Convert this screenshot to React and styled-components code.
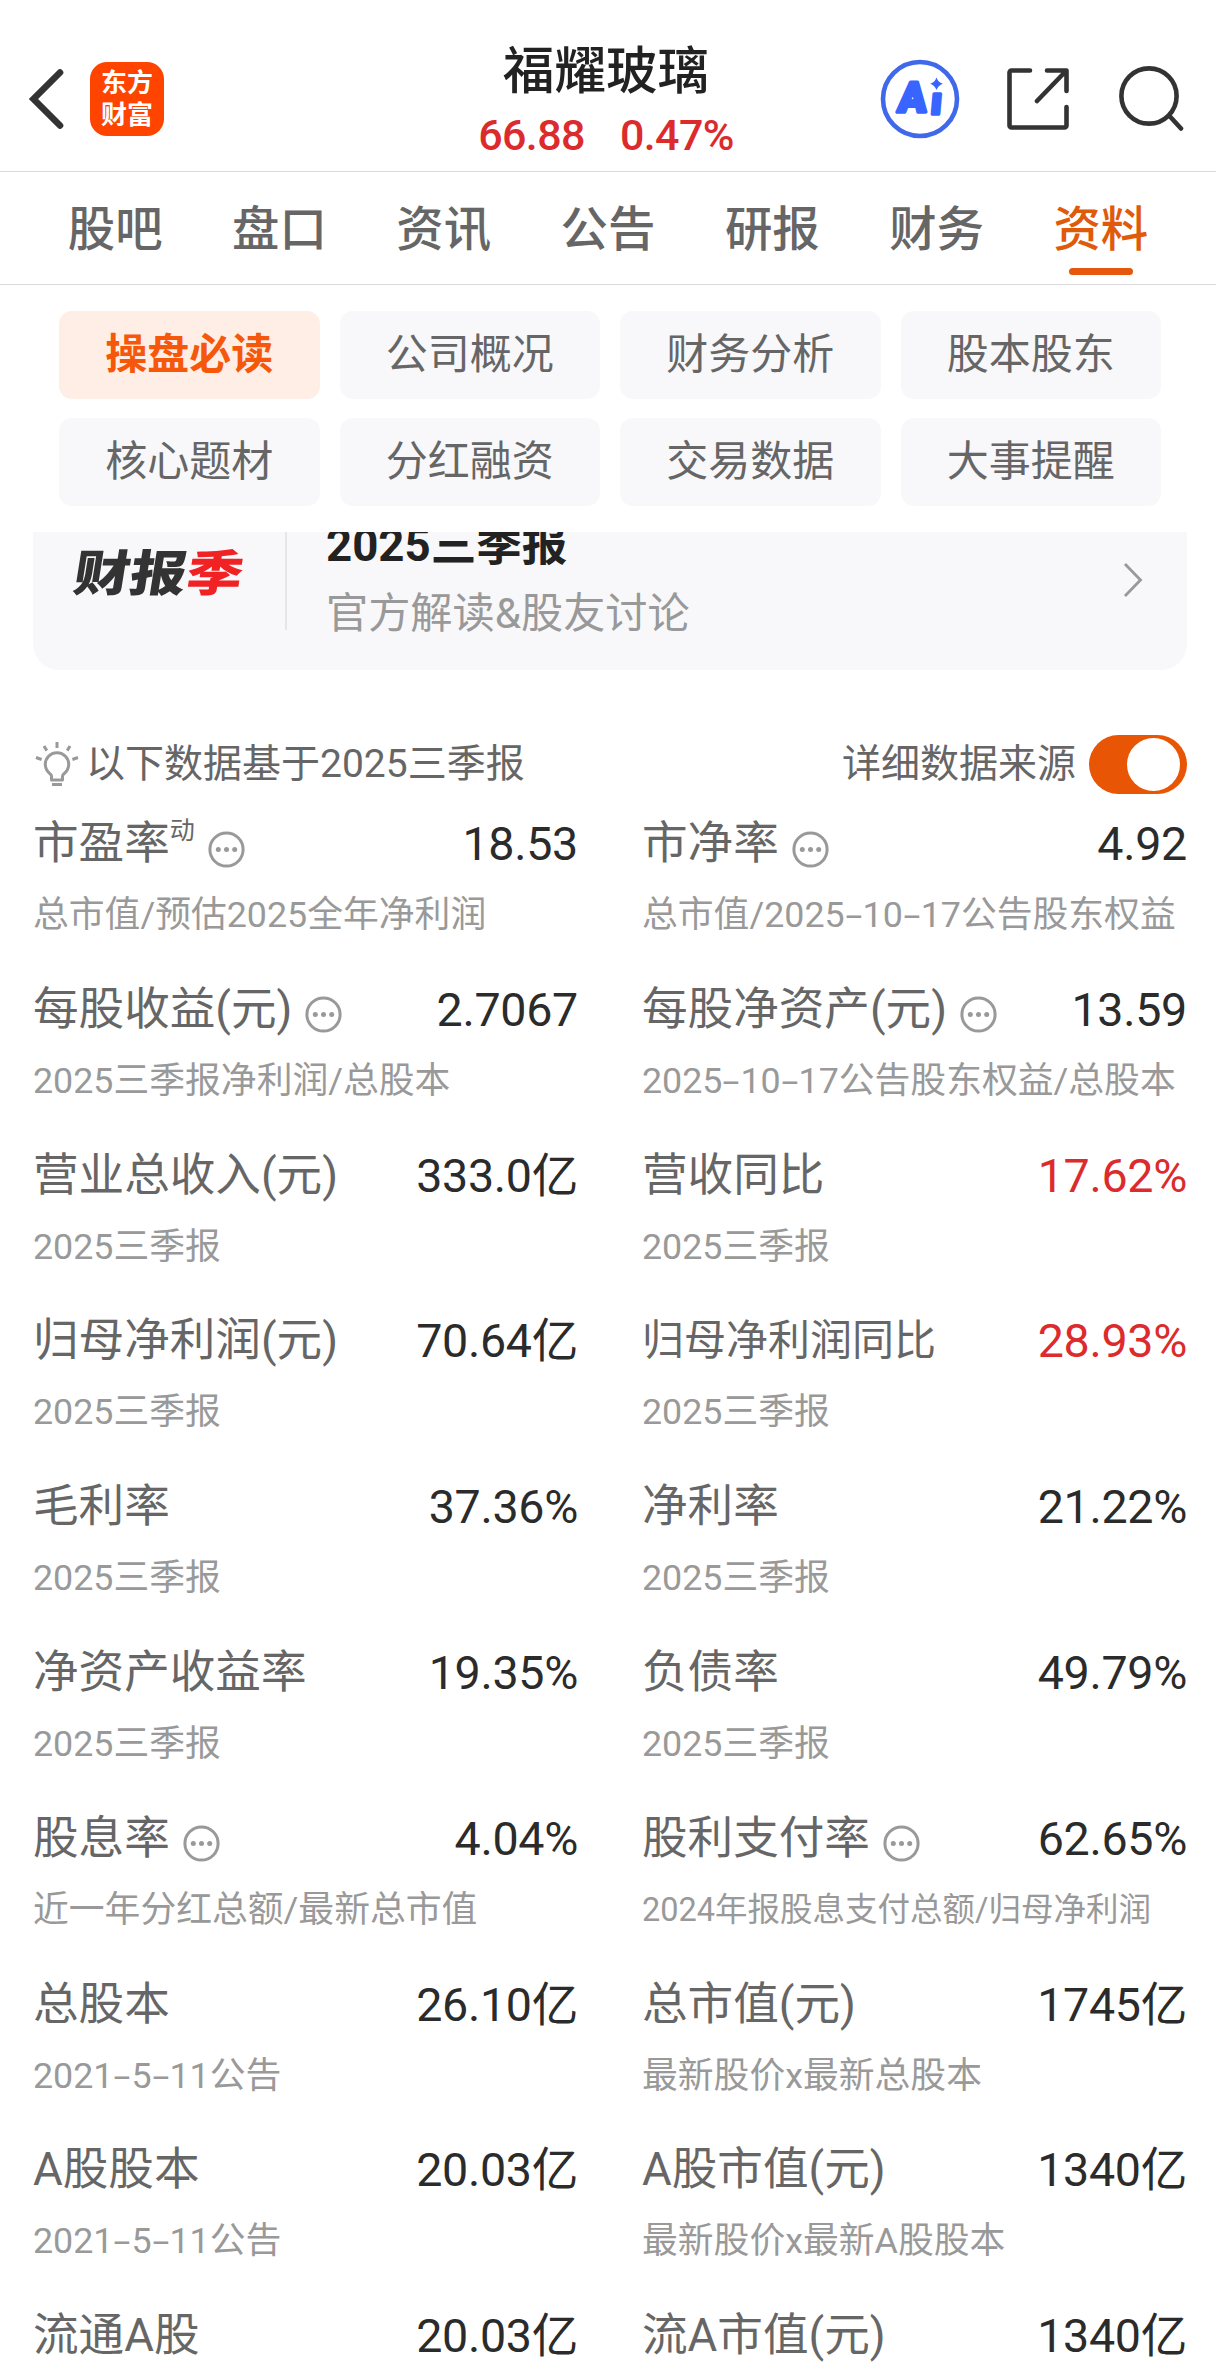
import React, { useState } from 'react';
import styled, { createGlobalStyle } from 'styled-components';

const GlobalStyle = createGlobalStyle`
  * {
    box-sizing: border-box;
  }

  body {
    margin: 0;
    background: #fff;
    font-family: Roboto, "Noto Sans CJK SC", sans-serif;
    color: #666;
  }

  button {
    border: 0;
    padding: 0;
    background: none;
    font: inherit;
    color: inherit;
    cursor: pointer;
  }
`;

const Page = styled.div`
  width: 1216px;
  height: 2377px;
  overflow: hidden;
  background: #fff;
`;

const Header = styled.header`
  display: grid;
  grid-template-columns: 1fr 260px 1fr;
  height: 172px;
  padding: 26px 32px 0 28px;
  border-bottom: 1px solid #d9d9d9;
`;

const HeaderSide = styled.div`
  display: flex;
  align-items: center;
  height: 146px;
  justify-content: ${({ $end }) => ($end ? 'flex-end' : 'flex-start')};
`;

const BackIcon = styled.svg`
  margin-right: 24px;
`;

const Logo = styled.div`
  display: flex;
  align-items: center;
  justify-content: center;
  width: 74px;
  height: 74px;
  border-radius: 17px;
  background: #ff4400;
  color: #fff;
  font-size: 26px;
  font-weight: 700;
  line-height: 32px;
  text-align: center;
`;

const Quote = styled.div`
  display: flex;
  flex-direction: column;
  align-items: center;
  white-space: nowrap;
`;

const StockName = styled.h1`
  margin: 14px 0 0;
  color: #222;
  font-size: 51.6px;
  font-weight: 500;
  line-height: 64px;
`;

const StockPrice = styled.div`
  display: flex;
  gap: 35px;
  margin-top: -1px;
  color: #dc2b2c;
  font-size: 43px;
  font-weight: 500;
  letter-spacing: -0.6px;
  line-height: 64px;
`;

const AiIcon = styled.svg`
  margin-right: 46px;
`;

const ShareIcon = styled.svg`
  margin-right: 48px;
`;

const Tabs = styled.nav`
  display: grid;
  grid-template-columns: repeat(7, 1fr);
  height: 113px;
  padding: 0 33px;
  border-bottom: 1px solid #d9d9d9;
`;

const Tab = styled.button`
  display: flex;
  flex-direction: column;
  align-items: center;
  padding-top: 26px;
  color: ${({ $active }) => ($active ? '#e05a0c' : '#666')};
  font-size: 47.4px;
  font-weight: 500;
  line-height: 64px;

  &::after {
    content: "";
    width: 64px;
    height: 7px;
    margin-top: 6px;
    border-radius: 4px;
    background: ${({ $active }) => ($active ? '#e4570c' : 'transparent')};
  }
`;

const Chips = styled.div`
  display: grid;
  grid-template-columns: repeat(4, 1fr);
  grid-auto-rows: 88px;
  gap: 19px 20px;
  height: 247px;
  padding: 26px 55px 0 59px;
`;

const Chip = styled.button`
  padding-bottom: 10px;
  border-radius: 13px;
  background: ${({ $active }) => ($active ? '#ffeee6' : '#f8f8fa')};
  color: ${({ $active }) => ($active ? '#f5580a' : '#666')};
  font-size: 42px;
  font-weight: ${({ $active }) => ($active ? 700 : 400)};
`;

const ReportViewport = styled.div`
  display: flex;
  align-items: flex-end;
  height: 138px;
  margin: 0 29px 0 33px;
  overflow: hidden;
`;

const ReportCard = styled.div`
  display: flex;
  flex: none;
  align-items: center;
  width: 100%;
  height: 178px;
  padding: 0 44px 3px 40px;
  border-radius: 26px;
  background: #f8f8fa;
`;

const SeasonMark = styled.div`
  width: 212px;
  margin-top: -10px;
  color: #333;
  font-size: 49px;
  font-weight: 900;
  line-height: 60px;
  white-space: nowrap;

  span {
    display: inline-block;
    transform: skewX(-9deg) scaleX(1.15);
    transform-origin: 0 60%;
  }

  em {
    color: #f02224;
    font-style: normal;
  }
`;

const ReportText = styled.div`
  flex: 1;
  height: 100px;
  padding-left: 39px;
  border-left: 2px solid #e6e6e9;
`;

const ReportTitle = styled.div`
  margin-top: -14px;
  color: #222;
  font-size: 45.6px;
  font-weight: 700;
  line-height: 60px;
`;

const ReportSub = styled.div`
  margin-top: 10px;
  color: #999;
  font-size: 42.2px;
  line-height: 56px;
`;

const Notice = styled.div`
  display: flex;
  align-items: center;
  height: 60px;
  margin-top: 64px;
  padding: 0 29px 0 35px;
  font-size: 39px;
  line-height: 56px;
`;

const NoticeText = styled.span`
  margin: -1px auto 0 7px;
`;

const SwitchLabel = styled.span`
  margin: -1px 13px 0 0;
`;

const Switch = styled.button`
  display: flex;
  align-items: center;
  justify-content: ${({ $on }) => ($on ? 'flex-end' : 'flex-start')};
  width: 98px;
  height: 59px;
  padding: 0 7px;
  border-radius: 30px;
  background: ${({ $on }) => ($on ? '#e85504' : '#ccc')};

  &::before {
    content: "";
    width: 53px;
    height: 53px;
    border-radius: 50%;
    background: #fff;
  }
`;

const Metrics = styled.div`
  display: grid;
  grid-template-columns: 1fr 1fr;
  grid-auto-rows: 165.8px;
  column-gap: 64px;
  padding: 20px 29px 0 33px;
`;

const MetricTop = styled.div`
  display: flex;
  align-items: center;
  height: 60px;
  line-height: 60px;
  white-space: nowrap;
`;

const MetricLabel = styled.span`
  font-size: ${({ $size }) => $size || 45.6}px;
`;

const Sup = styled.span`
  align-self: flex-start;
  font-size: 25px;
  line-height: 34px;
`;

const InfoIcon = styled.svg`
  margin: 10px 0 0 13px;
`;

const MetricValue = styled.span`
  margin-left: auto;
  color: ${({ $up }) => ($up ? '#dc2b2c' : '#2b2b2b')};
  font-size: 46.6px;
  letter-spacing: -0.3px;
`;

const MetricSource = styled.div`
  margin-top: 19px;
  color: #999;
  font-size: ${({ $size }) => $size || 35.8}px;
  line-height: 44px;
  white-space: nowrap;
`;

const Dash = styled.span`
  display: inline-block;
  width: 0.5em;
  text-align: center;
  transform: scaleX(1.7);
`;

const TABS = ['股吧', '盘口', '资讯', '公告', '研报', '财务', '资料'];

const CHIPS = [
  '操盘必读', '公司概况', '财务分析', '股本股东',
  '核心题材', '分红融资', '交易数据', '大事提醒',
];

const METRICS = [
  { label: '市盈率', sup: '动', info: true, value: '18.53', source: '总市值/预估2025全年净利润' },
  { label: '市净率', info: true, value: '4.92', source: '总市值/2025-10-17公告股东权益' },
  { label: '每股收益(元)', info: true, value: '2.7067', source: '2025三季报净利润/总股本' },
  { label: '每股净资产(元)', info: true, value: '13.59', source: '2025-10-17公告股东权益/总股本' },
  { label: '营业总收入(元)', value: '333.0亿', source: '2025三季报' },
  { label: '营收同比', value: '17.62%', up: true, source: '2025三季报' },
  { label: '归母净利润(元)', value: '70.64亿', source: '2025三季报' },
  { label: '归母净利润同比', labelSize: 42, value: '28.93%', up: true, source: '2025三季报' },
  { label: '毛利率', value: '37.36%', source: '2025三季报' },
  { label: '净利率', value: '21.22%', source: '2025三季报' },
  { label: '净资产收益率', value: '19.35%', source: '2025三季报' },
  { label: '负债率', value: '49.79%', source: '2025三季报' },
  { label: '股息率', info: true, value: '4.04%', source: '近一年分红总额/最新总市值' },
  { label: '股利支付率', info: true, value: '62.65%', source: '2024年报股息支付总额/归母净利润', sourceSize: 32.5 },
  { label: '总股本', value: '26.10亿', source: '2021-5-11公告' },
  { label: '总市值(元)', value: '1745亿', source: '最新股价x最新总股本' },
  { label: 'A股股本', value: '20.03亿', source: '2021-5-11公告' },
  { label: 'A股市值(元)', value: '1340亿', source: '最新股价x最新A股股本' },
  { label: '流通A股', value: '20.03亿' },
  { label: '流A市值(元)', value: '1340亿' },
];

// dates use a wider dash than the font has
const withDashes = (text) => text.split('-').map((part, i) => (
  <React.Fragment key={i}>
    {i > 0 && <Dash>-</Dash>}
    {part}
  </React.Fragment>
));

const Metric = ({ item }) => (
  <div>
    <MetricTop>
      <MetricLabel $size={item.labelSize}>{item.label}</MetricLabel>
      {item.sup && <Sup>{item.sup}</Sup>}
      {item.info && (
        <InfoIcon width="37" height="37" viewBox="0 0 37 37" fill="#999">
          <circle cx="18.5" cy="18.5" r="16.6" fill="none" stroke="#999" strokeWidth="3" />
          <circle cx="10.3" cy="18.5" r="2.5" />
          <circle cx="18.5" cy="18.5" r="2.5" />
          <circle cx="26.7" cy="18.5" r="2.5" />
        </InfoIcon>
      )}
      <MetricValue $up={item.up}>{item.value}</MetricValue>
    </MetricTop>
    {item.source && (
      <MetricSource $size={item.sourceSize}>{withDashes(item.source)}</MetricSource>
    )}
  </div>
);

const App = () => {
  const [tab, setTab] = useState('资料');
  const [chip, setChip] = useState('操盘必读');
  const [showSource, setShowSource] = useState(true);

  return (
    <>
      <GlobalStyle />
      <Page>
        <Header>
          <HeaderSide>
            <BackIcon width="38" height="62" viewBox="0 0 38 62" fill="none" stroke="#333" strokeWidth="6.6" strokeLinecap="round">
              <path d="M32 4.500L5.500 31 32 57.500" />
            </BackIcon>
            <Logo>
              东方
              <br />
              财富
            </Logo>
          </HeaderSide>
          <Quote>
            <StockName>福耀玻璃</StockName>
            <StockPrice>
              <span>66.88</span>
              <span>0.47%</span>
            </StockPrice>
          </Quote>
          <HeaderSide $end>
            <AiIcon width="80" height="80" viewBox="0 0 80 80">
              <circle cx="40" cy="40" r="37" fill="none" stroke="#4068ea" strokeWidth="4.600" />
              <g fill="#3864ff" stroke="#3864ff" strokeWidth="3.400" strokeLinejoin="round" fontFamily="Roboto" fontWeight="900">
                <text transform="translate(17 53) skewX(-5)" fontSize="42">A</text>
                <text transform="translate(50 55) skewX(-5)" fontSize="38">ı</text>
              </g>
              <path d="M56.500 18.500q1.600 4.700 6.300 6.300-4.700 1.600-6.300 6.300-1.600-4.700-6.300-6.300 4.700-1.600 6.300-6.300z" fill="#3864ff" />
            </AiIcon>
            <ShareIcon width="64" height="64" viewBox="0 0 64 64" fill="none" stroke="#333" strokeWidth="4.600" strokeLinecap="round" strokeLinejoin="round">
              <path d="M24 3.500H5.500a2 2 0 0 0-2 2v53a2 2 0 0 0 2 2h53a2 2 0 0 0 2-2V40M41 3.500h19.500V24M59 5L31 34" />
            </ShareIcon>
            <svg width="66" height="66" viewBox="0 0 66 66" fill="none" stroke="#333" strokeWidth="4.600" strokeLinecap="round">
              <circle cx="31" cy="30" r="27.600" />
              <path d="M51.500 50L63 62.500" />
            </svg>
          </HeaderSide>
        </Header>

        <Tabs>
          {TABS.map((name) => (
            <Tab key={name} $active={name === tab} onClick={() => setTab(name)}>{name}</Tab>
          ))}
        </Tabs>

        <Chips>
          {CHIPS.map((name) => (
            <Chip key={name} $active={name === chip} onClick={() => setChip(name)}>{name}</Chip>
          ))}
        </Chips>

        <ReportViewport>
          <ReportCard>
            <SeasonMark>
              <span>
                财报
                <em>季</em>
              </span>
            </SeasonMark>
            <ReportText>
              <ReportTitle>2025三季报</ReportTitle>
              <ReportSub>官方解读&amp;股友讨论</ReportSub>
            </ReportText>
            <svg width="20" height="36" viewBox="0 0 20 36" fill="none" stroke="#999" strokeWidth="2.800">
              <path d="M2 2l15.500 16L2 34" />
            </svg>
          </ReportCard>
        </ReportViewport>

        <Notice>
          <svg width="44" height="46" viewBox="0 0 44 46" fill="none" stroke="#999" strokeWidth="3" strokeLinejoin="round">
            <path d="M16.500 39v-4c0-1-.6-1.600-1.500-2.300a11.700 11.700 0 1 1 14 0c-.9.7-1.500 1.300-1.500 2.300v4z" />
            <path d="M17 43.500h10M22 1v6M9 5l2.800 4.600M35 5l-2.800 4.600M1 16.500l5.600 2M43 16.500l-5.600 2" />
          </svg>
          <NoticeText>以下数据基于2025三季报</NoticeText>
          <SwitchLabel>详细数据来源</SwitchLabel>
          <Switch $on={showSource} onClick={() => setShowSource(!showSource)} aria-label="详细数据来源" />
        </Notice>

        <Metrics>
          {METRICS.map((item) => <Metric key={item.label} item={item} />)}
        </Metrics>
      </Page>
    </>
  );
};

export default App;
